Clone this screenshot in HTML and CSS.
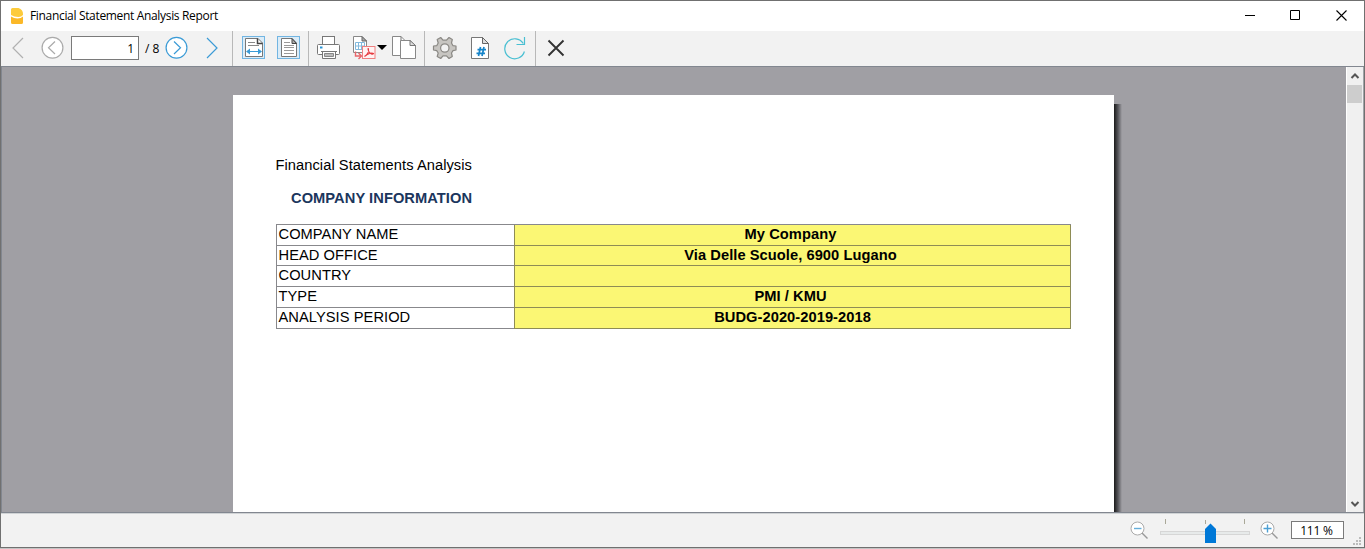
FILE: index.html
```html
<!DOCTYPE html>
<html lang="en">
<head>
<meta charset="utf-8">
<title>Financial Statement Analysis Report</title>
<link rel="stylesheet" href="styles.css">
</head>
<body>
<div class="window">
  <header class="titlebar">
    <svg class="logo" width="12" height="18" viewBox="0 0 12 18"><path d="M0 1.500Q0 0 1.500 0H7.500Q12 1.500 12 6V7Q10.500 9 7.500 9Q3 9 0 7Z" fill="#fdcb3b"/><path d="M0 8.500Q3 10.500 6.500 10.500T12 8.500V14.500Q12 16 10.500 16H1.500Q0 16 0 14.500Z" fill="#fbb827"/></svg>
    <span class="title">Financial Statement Analysis Report</span>
    <div class="controls">
      <svg width="11" height="11" viewBox="0 0 11 11"><path d="M0 5.500H10" stroke="#000"/></svg>
      <svg width="11" height="11" viewBox="0 0 11 11"><path d="M.5 .5H9.500V9.500H.5Z" fill="none" stroke="#000"/></svg>
      <svg width="11" height="11" viewBox="0 0 11 11"><path d="M.5 .5L10.500 10.500M10.500 .5L.5 10.500" stroke="#000" stroke-width="1.100"/></svg>
    </div>
  </header>
  <nav class="toolbar">
    <svg class="first" width="14" height="24" viewBox="11 36 14 24"><path d="M23 38L13 48L23 58" class="line" stroke="#b0b0b0"/></svg>
    <svg class="prev" width="24" height="24" viewBox="41 36 24 24"><circle cx="52.500" cy="47.800" r="10.400" class="line" fill="#fff" stroke="#aaa"/><path d="M55 41.500L48.500 47.800L55 54" class="line" stroke="#aaa"/></svg>
    <div class="pagebox">1</div>
    <span class="count">/ 8</span>
    <svg class="next" width="24" height="24" viewBox="165 36 24 24"><circle cx="176.500" cy="47.800" r="10.400" class="line" fill="#fff" stroke="#3b9bd6"/><path d="M174 41.500L180.500 47.800L174 54" class="line" stroke="#3b9bd6"/></svg>
    <svg class="last" width="14" height="24" viewBox="206 36 14 24"><path d="M207 38L217 48L207 58" class="line" stroke="#3b9bd6"/></svg>
    <i class="sep sep-a"></i>
    <svg class="fit" width="24" height="24" viewBox="241 36 24 24"><rect x="241.500" y="36.500" width="22" height="22" fill="#dcecf7" stroke="#72b5e2"/><path d="M244.500 38.500H257L261.500 43V56.500H244.500Z" fill="#fff" stroke="#777"/><path d="M256.500 38.500V43.500H261.500" fill="none" stroke="#444" stroke-width="1.500"/><path d="M247 42.500H254M247 45.500H258" stroke="#888"/><path d="M245 48H261V55H245Z" fill="#fff"/><path d="M247 51.500H259" stroke="#3b9bd6"/><path d="M249 48.500V54.500L245 51.500ZM257 48.500V54.500L261 51.500Z" fill="#3b9bd6"/></svg>
    <svg class="full" width="24" height="24" viewBox="276 36 24 24"><rect x="276.500" y="36.500" width="22" height="22" fill="#dcecf7" stroke="#72b5e2"/><path d="M280.500 38.500H291L295.500 43V56.500H280.500Z" fill="#fff" stroke="#777"/><path d="M291 38.500V43.500H295.500Z" fill="#aaa" stroke="#444"/><path d="M283 42.500H289M283 45.500H293M283 47.500H293M283 50.500H293M283 53.500H293" stroke="#999"/></svg>
    <i class="sep sep-b"></i>
    <svg class="print" width="26" height="26" viewBox="316 35 26 26"><rect x="322.500" y="36.500" width="12" height="8" fill="#fff" stroke="#777"/><rect x="317.500" y="44.500" width="22" height="10" rx="1" fill="#fff" stroke="#777"/><path d="M320 47.500H322.500" stroke="#2894d6" stroke-width="2"/><path d="M322.500 51.500V58.500H335.500V51.500Z" fill="#fff" stroke="#777"/><path d="M321 51.500H337" stroke="#777"/><path d="M324.500 53.500H333.500V56.500H324.500Z" fill="#bbb" stroke="#888"/></svg>
    <svg class="pdf" width="26" height="26" viewBox="351 35 26 26"><path d="M353.500 36.500H362L366.500 41V52.500H353.500Z" fill="#fff" stroke="#888"/><path d="M362 36.500V41H366.500Z" fill="#aaa" stroke="#666"/><path d="M355.500 42.500H364.500V49.500H355.500ZM355.500 46H364.500M358.500 42.500V49.500M361.500 42.500V49.500" fill="none" stroke="#82b9dc"/><rect x="362.500" y="46.500" width="12.500" height="12" fill="#fff2f2" stroke="#ef8080"/><path d="M364.500 56.500C367 55 369 52 368.500 49C368 47.500 367.500 50 369.500 52.500C371 54.500 373 54.500 373.500 53.500C372 52.500 367.500 53.500 364.500 56.500Z" fill="none" stroke="#e63b40" stroke-width="1.100"/><path d="M355.500 51.500V56H361M358.500 53L361.500 56L358.500 59" fill="none" stroke="#e96569" stroke-width="1.400"/></svg>
    <svg class="drop" width="10" height="6" viewBox="0 0 10 6"><path d="M0 0H10L5 5Z"/></svg>
    <svg class="copy" width="26" height="26" viewBox="391 35 26 26"><path d="M392.500 36.500H401L405.500 41V55.500H392.500Z" fill="#fff" stroke="#888"/><path d="M401 36.500V41.500H405.500" fill="none" stroke="#777"/><path d="M400.500 40.500H410L415.500 45.500V58.500H400.500Z" fill="#fff" stroke="#888"/><path d="M410 40.500V45.500H415.500Z" fill="#ddd" stroke="#777"/></svg>
    <i class="sep sep-c"></i>
    <svg class="gear" width="26" height="26" viewBox="432 35 26 26"><path d="M440.700 37.500L443 40.200H446.500L449 37.500L452.300 39.500L451.500 43L453 45.700L456 46V50L453 50.700L451.500 53L452.300 56.500L449 58.500L446.500 55.800H443L440.700 58.500L437.200 56.500L438.200 53L436.700 50.700L433.500 50V46L436.700 45.700L438.200 43L437.200 39.500Z" fill="#c7c5c1" stroke="#8b8985" stroke-width="1.200" stroke-linejoin="round"/><circle cx="444.800" cy="48" r="4.200" fill="#f2f2f2" stroke="#8b8985" stroke-width="1.200"/></svg>
    <svg class="hash" width="20" height="26" viewBox="470 35 20 26"><path d="M471.500 37.500H482.500L488.500 43.500V58.500H471.500Z" fill="#fff" stroke="#777"/><path d="M482.500 37.500V43.500H488.500Z" fill="#ddd" stroke="#666"/><path d="M480.500 47L478.500 56M484 47L482 56M477.500 49.700H486M476.500 53.300H485" stroke="#1684c9" stroke-width="1.700"/></svg>
    <svg class="refresh" width="26" height="26" viewBox="503 35 26 26"><path d="M524.400 51.500A10 10 0 1 1 523.300 43.500M524.500 37V44.500H516.500" class="line" stroke="#49bfd2"/></svg>
    <i class="sep sep-d"></i>
    <svg class="close" width="18" height="18" viewBox="547 39 18 18"><path d="M548.500 40.500L563.500 55.500M563.500 40.500L548.500 55.500" stroke="#333" stroke-width="1.900"/></svg>
  </nav>
  <main class="viewer">
    <div class="canvas">
      <article class="page">
        <p class="report">Financial Statements Analysis</p>
        <h1>COMPANY INFORMATION</h1>
        <div class="table">
          <div class="label">COMPANY NAME</div><div class="value">My Company</div>
          <div class="label">HEAD OFFICE</div><div class="value">Via Delle Scuole, 6900 Lugano</div>
          <div class="label">COUNTRY</div><div class="value"></div>
          <div class="label">TYPE</div><div class="value">PMI / KMU</div>
          <div class="label">ANALYSIS PERIOD</div><div class="value">BUDG-2020-2019-2018</div>
        </div>
      </article>
      <div class="shadow"></div>
    </div>
    <div class="scroll">
      <svg width="17" height="18" viewBox="0 0 17 18"><path d="M4.500 11L8 7.500L11.500 11" fill="none" stroke="#555" stroke-width="2"/></svg>
      <div class="thumb"></div>
      <svg class="down" width="17" height="18" viewBox="0 0 17 18"><path d="M4.500 8L8 11.500L11.500 8" fill="none" stroke="#555" stroke-width="2"/></svg>
    </div>
  </main>
  <footer class="status">
    <svg class="zoom-out" width="20" height="20" viewBox="0 0 20 20"><path d="M12 12L17.500 17.500" stroke="#999" stroke-width="1.400"/><circle cx="7.500" cy="7.500" r="6.500" fill="#fff" stroke="#aaa"/><path d="M4 7.500H11.500" stroke="#65aeda" stroke-width="1.400"/></svg>
    <svg class="slider" width="92" height="28" viewBox="0 0 92 28"><path d="M6.500 2V7M46.500 3V7M85.500 2V7" stroke="#aaa898"/><rect x="1.500" y="14.500" width="89" height="3" fill="#e7eaea" stroke="#d6d6d6"/><path d="M46 12L51.500 6.500L57 12V26H46Z" fill="#0078d7"/></svg>
    <svg class="zoom-in" width="20" height="20" viewBox="0 0 20 20"><path d="M12 12L17.500 17.500" stroke="#999" stroke-width="1.400"/><circle cx="7.500" cy="7.500" r="6.500" fill="#fff" stroke="#aaa"/><path d="M3.500 7.500H11.500M7.500 3.500V11.500" stroke="#4da0d4" stroke-width="1.400"/></svg>
    <div class="percent">111 %</div>
    <svg class="grip" width="8" height="8" viewBox="0 0 8 8"><path d="M6 0h2v2h-2zM3 3h2v2h-2zM6 3h2v2h-2zM0 6h2v2h-2zM3 6h2v2h-2zM6 6h2v2h-2z" fill="#bbb"/></svg>
  </footer>
</div>
</body>
</html>
```
FILE: styles.css
```css
* { box-sizing: border-box; }
body { margin: 0; background: #c4c4c4; overflow: hidden; font: 12px "Open Sans", "Noto Sans", sans-serif; color: #000; }
svg { display: block; flex: none; }
.window { width: 1365px; height: 548px; border: 1px solid #707070; background: #f2f2f2; display: flex; flex-direction: column; }
.titlebar { height: 30px; flex: none; background: #fff; display: flex; align-items: center; padding-left: 10px; }
.logo { margin-top: 1px; }
.title { margin-left: 7px; line-height: 16px; letter-spacing: -0.33px; white-space: nowrap; }
.controls { margin-left: auto; display: flex; gap: 34px; padding-right: 17px; margin-top: -1px; }
.controls svg:last-child { margin-left: 1px; }
.toolbar { height: 36px; flex: none; border-bottom: 1px solid #828790; display: flex; align-items: center; padding-bottom: 1px; }
.line { fill: none; stroke-width: 1.2; }
circle.line { fill: #fff; }
.first { margin-left: 10px; }
.prev { margin-left: 16px; }
.pagebox { width: 68px; height: 24px; margin-left: 6px; border: 1px solid #7a7a7a; background: #fff; text-align: right; padding-right: 4px; line-height: 23px; }
.count { width: 16px; margin-left: 6px; white-space: nowrap; padding-top: 1px; }
.next { margin-left: 4px; }
.last { margin-left: 17px; }
.sep { width: 1px; height: 35px; flex: none; margin-bottom: -1px; background: #b8b8b8; }
.sep-a { margin-left: 12px; }
.fit { margin-left: 9px; }
.full { margin-left: 11px; }
.sep-b { margin-left: 7px; }
.print { margin-left: 7px; }
.pdf { margin-left: 9px; }
.copy { margin-left: 4px; }
.sep-c { margin-left: 7px; }
.gear { margin-left: 7px; }
.hash { margin-left: 12px; }
.refresh { margin-left: 13px; }
.sep-d { margin-left: 6px; }
.close { margin-left: 11px; }
.viewer { height: 446px; flex: none; display: flex; border-left: 1px solid #828790; border-bottom: 1px solid #828790; }
.canvas { flex: 1; background: #a09fa4; display: flex; padding: 28px 0 0 231px; }
.page { width: 881px; height: 417px; background: #fff; padding: 60px 43px 0; font: 14.67px/20px "Liberation Sans", Arial, sans-serif; letter-spacing: 0.06px; }
.page p, .page h1 { margin: 0; font-size: inherit; line-height: 20px; }
.page h1 { margin: 13px 0 0 15px; color: #1b365d; }
.table { display: grid; grid-template-columns: 238px 557px; grid-template-rows: 21px 20px 21px 21px 21px; width: 795px; margin-top: 16px; border-top: 1px solid #88888c; }
.page .report { margin-left: -0.5px; }
.table > div { border-left: 1px solid #88888c; border-bottom: 1px solid #88888c; line-height: 19px; }
.table .label { padding-left: 1.5px; }
.table .value { background: #fbf774; border-color: #8e8c55; border-right: 1px solid #8e8c55; text-align: center; font-weight: bold; padding-right: 4px; }
.table .value:last-child { padding-right: 0; }
.shadow { width: 8px; height: 408px; margin-top: 9px; background: linear-gradient(to right, #1a1a1a, #55555a 50%, #a09fa4); }
.scroll { width: 18px; border-left: 1px solid #fff; border-right: 1px solid #a0a3a8; background: #f0f0f0; display: flex; flex-direction: column; }
.thumb { width: 15px; height: 18px; background: #cdcdcd; }
.down { margin-top: auto; }
.status { flex: 1; border-top: 1px solid #d0d3d5; display: flex; align-items: flex-start; }
.zoom-out { margin: 7px 0 0 1129px; }
.slider { margin: 3px 0 0 9px; }
.zoom-in { margin: 7px 0 0 9px; }
.percent { width: 53px; height: 18px; margin: 7px 0 0 11px; border: 1px solid #7a7a7a; background: #fff; text-align: center; line-height: 17px; letter-spacing: -0.2px; padding-right: 2px; }
.grip { margin: 23px 0 0 9px; }
```
